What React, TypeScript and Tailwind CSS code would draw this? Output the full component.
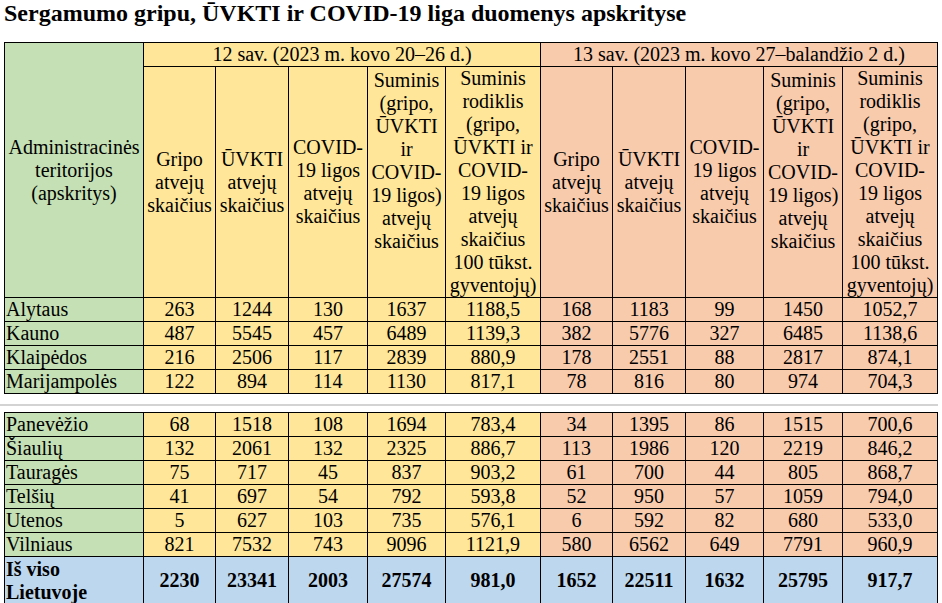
const colWidths = ["w-[139px]", "w-[72px]", "w-[73px]", "w-[79px]", "w-[78px]", "w-[95px]", "w-[72px]", "w-[73px]", "w-[78px]", "w-[79px]", "w-[95px]"];

const headers: { lines: string[]; top?: boolean }[] = [
    { lines: ["Gripo", "atvejų", "skaičius"] },
    { lines: ["ŪVKTI", "atvejų", "skaičius"] },
    { lines: ["COVID-", "19 ligos", "atvejų", "skaičius"] },
    { lines: ["Suminis", "(gripo,", "ŪVKTI", "ir", "COVID-", "19 ligos)", "atvejų", "skaičius"], top: true },
    { lines: ["Suminis", "rodiklis", "(gripo,", "ŪVKTI ir", "COVID-", "19 ligos", "atvejų", "skaičius", "100 tūkst.", "gyventojų)"] },
];

const topRows = [
    ["Alytaus", "263", "1244", "130", "1637", "1188,5", "168", "1183", "99", "1450", "1052,7"],
    ["Kauno", "487", "5545", "457", "6489", "1139,3", "382", "5776", "327", "6485", "1138,6"],
    ["Klaipėdos", "216", "2506", "117", "2839", "880,9", "178", "2551", "88", "2817", "874,1"],
    ["Marijampolės", "122", "894", "114", "1130", "817,1", "78", "816", "80", "974", "704,3"],
];

const bottomRows = [
    ["Panevėžio", "68", "1518", "108", "1694", "783,4", "34", "1395", "86", "1515", "700,6"],
    ["Šiaulių", "132", "2061", "132", "2325", "886,7", "113", "1986", "120", "2219", "846,2"],
    ["Tauragės", "75", "717", "45", "837", "903,2", "61", "700", "44", "805", "868,7"],
    ["Telšių", "41", "697", "54", "792", "593,8", "52", "950", "57", "1059", "794,0"],
    ["Utenos", "5", "627", "103", "735", "576,1", "6", "592", "82", "680", "533,0"],
    ["Vilniaus", "821", "7532", "743", "9096", "1121,9", "580", "6562", "649", "7791", "960,9"],
];

const totals = ["2230", "23341", "2003", "27574", "981,0", "1652", "22511", "1632", "25795", "917,7"];

const cell = "border border-black p-0 leading-[23px]";

const Cols = () => (
    <colgroup>
        {colWidths.map((w, i) => (
            <col key={i} className={w} />
        ))}
    </colgroup>
);

const DataRow = ({ row, h }: { row: string[]; h: string }) => (
    <tr className={h}>
        {row.map((v, i) => (
            <td
                key={i}
                className={`${cell} ${i === 0 ? "text-left pl-[1px] bg-[#c5e0b4]" : i <= 5 ? "text-center bg-[#ffe699]" : "text-center bg-[#f8cbad]"}`}
            >
                {v}
            </td>
        ))}
    </tr>
);

export default function App() {
    return (
        <div className="w-[942px] h-[603px] bg-white text-black overflow-hidden font-['Liberation_Serif','DejaVu_Serif',serif]">
            <h1 className="pt-[1px] pl-[4px] text-[24px] leading-[24px] font-bold">
                Sergamumo gripu, ŪVKTI ir COVID-19 liga duomenys apskrityse
            </h1>

            <table className="mt-[17px] ml-[4px] w-[934px] table-fixed border-collapse text-[20px]">
                <Cols />
                <thead>
                    <tr className="h-[23px]">
                        <td rowSpan={2} className={`${cell} text-center align-middle bg-[#c5e0b4]`}>
                            Administracinės
                            <br />
                            teritorijos
                            <br />
                            (apskritys)
                        </td>
                        <td colSpan={5} className={`${cell} text-center bg-[#ffe699]`}>
                            12 sav. (2023 m. kovo 20–26 d.)
                        </td>
                        <td colSpan={5} className={`${cell} text-center bg-[#f8cbad]`}>
                            13 sav. (2023 m. kovo 27–balandžio 2 d.)
                        </td>
                    </tr>
                    <tr>
                        {[0, 1].map((g) =>
                            headers.map((hd, i) => (
                                <td
                                    key={`${g}-${i}`}
                                    className={`${cell} text-center ${hd.top ? "align-top pt-[2px]" : "align-middle"} ${g === 0 ? "bg-[#ffe699]" : "bg-[#f8cbad]"}`}
                                >
                                    {hd.lines.map((l, k) => (
                                        <div key={k} className="whitespace-nowrap">{l}</div>
                                    ))}
                                </td>
                            ))
                        )}
                    </tr>
                </thead>
                <tbody>
                    {topRows.map((r, i) => (
                        <DataRow key={i} row={r} h="h-[24px]" />
                    ))}
                </tbody>
            </table>

            {/* page break between the two pieces of the table */}
            <div className="mt-[10px] h-[2px] w-[938px] bg-[#d3d3d3]"></div>

            <table className="mt-[6px] ml-[4px] w-[934px] table-fixed border-collapse text-[20px]">
                <Cols />
                <tbody>
                    {bottomRows.map((r, i) => (
                        <DataRow key={i} row={r} h="h-[23.6px]" />
                    ))}
                    <tr className="h-[48px] font-bold">
                        <td className={`${cell} text-left pl-[1px] bg-[#bdd7ee]`}>
                            Iš viso
                            <br />
                            Lietuvoje
                        </td>
                        {totals.map((v, i) => (
                            <td key={i} className={`${cell} text-center bg-[#bdd7ee]`}>
                                {v}
                            </td>
                        ))}
                    </tr>
                </tbody>
            </table>
        </div>
    );
}
